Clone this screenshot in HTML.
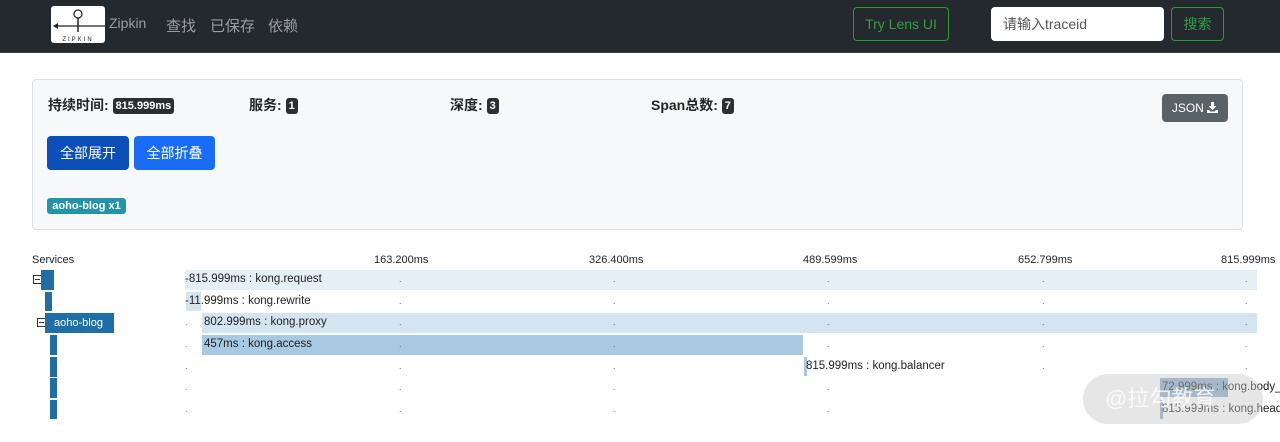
<!DOCTYPE html>
<html><head><meta charset="utf-8"><style>
*{margin:0;padding:0;box-sizing:border-box}
body{width:1280px;height:442px;background:#fff;font-family:"Liberation Sans","Noto Sans CJK SC",sans-serif;position:relative;overflow:hidden;color:#212529}
.nav{position:absolute;left:0;top:0;width:1280px;height:53px;background:#24292e;border-bottom:1px solid #3a4045}
.abs{position:absolute}
.navt{color:#9a9da0;font-size:15px}
.card{position:absolute;left:32px;top:79px;width:1211px;height:151px;background:#f7f8fa;border:1px solid #dcdfe3;border-radius:4px}
.lbl{position:absolute;top:15px;font-size:14px;font-weight:bold;color:#212529}
.bdg{display:inline-block;background:#2b2f33;color:#fff;font-size:11px;font-weight:bold;padding:2px 3px;border-radius:3px;vertical-align:1px}
.row{position:absolute;left:185px;width:1095px;height:20px;font-size:11.5px;color:#222}
.sv{position:absolute;background:#1f6fa6}
.box{position:absolute;width:9px;height:9px;border:1px solid #333;font-size:0}
.box:after{content:"";position:absolute;left:1px;top:3px;width:5px;height:1px;background:#333}
</style></head><body>
<div class="nav">
  <div class="abs" style="left:51px;top:6px;width:54px;height:37px;background:#fff;border-radius:3px">
    <svg width="54" height="37" viewBox="0 0 54 37"><circle cx="27" cy="8" r="4" fill="none" stroke="#222" stroke-width="1.2"/><line x1="27" y1="12" x2="27" y2="26" stroke="#222" stroke-width="1.5"/><line x1="4" y1="20" x2="54" y2="20" stroke="#222" stroke-width="1.2"/><polygon points="2,20 7,17 7,23" fill="#222"/><text x="27" y="35" font-size="6" text-anchor="middle" fill="#222" font-family="Liberation Sans" letter-spacing="2">ZIPKIN</text></svg>
  </div>
  <div class="abs navt" style="left:109px;top:15px;font-size:14px">Zipkin</div>
  <div class="abs navt" style="left:166px;top:15px">查找</div>
  <div class="abs navt" style="left:210px;top:15px">已保存</div>
  <div class="abs navt" style="left:268px;top:15px">依赖</div>
  <div class="abs" style="left:853px;top:7px;width:96px;height:34px;border:1px solid #2a9a3a;border-radius:4px;color:#2ea043;font-size:14px;text-align:center;line-height:32px">Try Lens UI</div>
  <div class="abs" style="left:991px;top:7px;width:173px;height:34px;background:#fff;border-radius:4px;color:#555;font-size:14px;line-height:34px;padding-left:12px">请输入traceid</div>
  <div class="abs" style="left:1171px;top:7px;width:53px;height:34px;border:1px solid #2a9a3a;border-radius:4px;color:#2ea043;font-size:14px;text-align:center;line-height:32px">搜索</div>
</div>
<div class="card">
  <div class="lbl" style="left:15px">持续时间: <span class="bdg">815.999ms</span></div>
  <div class="lbl" style="left:216px">服务: <span class="bdg">1</span></div>
  <div class="lbl" style="left:417px">深度: <span class="bdg">3</span></div>
  <div class="lbl" style="left:618px">Span总数: <span class="bdg">7</span></div>
  <div class="abs" style="left:1129px;top:14px;width:66px;height:28px;background:#5a6268;border-radius:4px;color:#fff;font-size:12px;line-height:28px;text-align:center">JSON <svg width="11" height="11" viewBox="0 0 11 11" style="vertical-align:-1px"><path d="M4 0h3v4h2.5L5.5 8 1.5 4H4z M0 8h2l1.5 1.5h4L9 8h2v3H0z" fill="#fff"/></svg></div>
  <div class="abs" style="left:14px;top:56px;width:82px;height:34px;background:#0d4fb8;border-radius:4px;color:#fff;font-size:14px;line-height:34px;text-align:center">全部展开</div>
  <div class="abs" style="left:101px;top:56px;width:81px;height:34px;background:#1a6cf5;border-radius:4px;color:#fff;font-size:14px;line-height:34px;text-align:center">全部折叠</div>
  <div class="abs" style="left:14px;top:118px;width:79px;height:16px;background:#2395a8;border-radius:3px;color:#fff;font-size:11px;font-weight:bold;line-height:16px;text-align:center">aoho-blog x1</div>
</div>
<div class="abs" style="left:32px;top:254px;font-size:11px">Services</div>
<div class="abs" style="left:374px;top:254px;font-size:11px">163.200ms</div>
<div class="abs" style="left:589px;top:254px;font-size:11px">326.400ms</div>
<div class="abs" style="left:803px;top:254px;font-size:11px">489.599ms</div>
<div class="abs" style="left:1018px;top:254px;font-size:11px">652.799ms</div>
<div class="abs" style="left:1221px;top:254px;font-size:11px">815.999ms</div>

<div class="box" style="left:33px;top:275px"></div>
<div class="sv" style="left:41px;top:270px;width:13px;height:20px"></div>
<div class="sv" style="left:45px;top:292px;width:7px;height:19px"></div>
<div class="box" style="left:37px;top:318px"></div>
<div class="sv" style="left:45px;top:313px;width:69px;height:20px;color:#fff;font-size:11px;line-height:20px;padding-left:9px">aoho-blog</div>
<div class="sv" style="left:50px;top:335px;width:7px;height:20px"></div>
<div class="sv" style="left:50px;top:357px;width:7px;height:20px"></div>
<div class="sv" style="left:50px;top:378px;width:7px;height:20px"></div>
<div class="sv" style="left:50px;top:400px;width:7px;height:19px"></div>

<div class="row" style="top:270px"><div class="abs" style="left:0;top:0;width:1072px;height:20px;background:#e4eff7"></div><div class="abs" style="left:0;top:3px">-815.999ms : kong.request</div></div>
<div class="row" style="top:292px"><div class="abs" style="left:1px;top:0;width:15px;height:19px;background:#d4e4f0"></div><div class="abs" style="left:0;top:3px">-11.999ms : kong.rewrite</div></div>
<div class="row" style="top:313px"><div class="abs" style="left:17px;top:0;width:1055px;height:20px;background:#d4e4f0"></div><div class="abs" style="left:19px;top:3px">802.999ms : kong.proxy</div></div>
<div class="row" style="top:335px"><div class="abs" style="left:17px;top:0;width:601px;height:20px;background:#a8c9e1"></div><div class="abs" style="left:19px;top:3px">457ms : kong.access</div></div>
<div class="row" style="top:357px"><div class="abs" style="left:619px;top:0;width:3px;height:19px;background:#a8c9e1"></div><div class="abs" style="left:621px;top:3px">815.999ms : kong.balancer</div></div>
<div class="row" style="top:378px"><div class="abs" style="left:975px;top:0;width:68px;height:19px;background:#88adc8"></div><div class="abs" style="left:977px;top:3px;white-space:nowrap">72.999ms : kong.body_</div></div>
<div class="row" style="top:400px"><div class="abs" style="left:975px;top:0;width:3px;height:19px;background:#88adc8"></div><div class="abs" style="left:977px;top:3px;white-space:nowrap">815.999ms : kong.head</div></div>

<div class="abs" style="left:185px;top:266px;width:1095px;height:150px;font-size:9px;color:#666">
  <div class="abs" style="left:0;top:8px">.</div><div class="abs" style="left:214px;top:8px">.</div><div class="abs" style="left:428px;top:8px">.</div><div class="abs" style="left:642px;top:8px">.</div><div class="abs" style="left:857px;top:8px">.</div><div class="abs" style="left:1060px;top:8px">.</div>
  <div class="abs" style="left:214px;top:30px">.</div><div class="abs" style="left:428px;top:30px">.</div><div class="abs" style="left:642px;top:30px">.</div><div class="abs" style="left:857px;top:30px">.</div><div class="abs" style="left:1060px;top:30px">.</div>
  <div class="abs" style="left:0;top:51px">.</div><div class="abs" style="left:214px;top:51px">.</div><div class="abs" style="left:428px;top:51px">.</div><div class="abs" style="left:642px;top:51px">.</div><div class="abs" style="left:857px;top:51px">.</div><div class="abs" style="left:1060px;top:51px">.</div>
  <div class="abs" style="left:0;top:73px">.</div><div class="abs" style="left:214px;top:73px">.</div><div class="abs" style="left:428px;top:73px">.</div><div class="abs" style="left:642px;top:73px">.</div><div class="abs" style="left:857px;top:73px">.</div><div class="abs" style="left:1060px;top:73px">.</div>
  <div class="abs" style="left:0;top:95px">.</div><div class="abs" style="left:214px;top:95px">.</div><div class="abs" style="left:428px;top:95px">.</div><div class="abs" style="left:857px;top:95px">.</div><div class="abs" style="left:1060px;top:95px">.</div>
  <div class="abs" style="left:0;top:116px">.</div><div class="abs" style="left:214px;top:116px">.</div><div class="abs" style="left:428px;top:116px">.</div><div class="abs" style="left:642px;top:116px">.</div>
  <div class="abs" style="left:0;top:138px">.</div><div class="abs" style="left:214px;top:138px">.</div><div class="abs" style="left:428px;top:138px">.</div><div class="abs" style="left:642px;top:138px">.</div>
</div>
<div class="abs" style="left:1083px;top:374px;width:180px;height:50px;background:rgba(200,200,200,0.45);border-radius:25px;color:rgba(255,255,255,0.8);font-size:22px;line-height:50px;padding-left:22px">@拉勾教育</div>
</body></html>
